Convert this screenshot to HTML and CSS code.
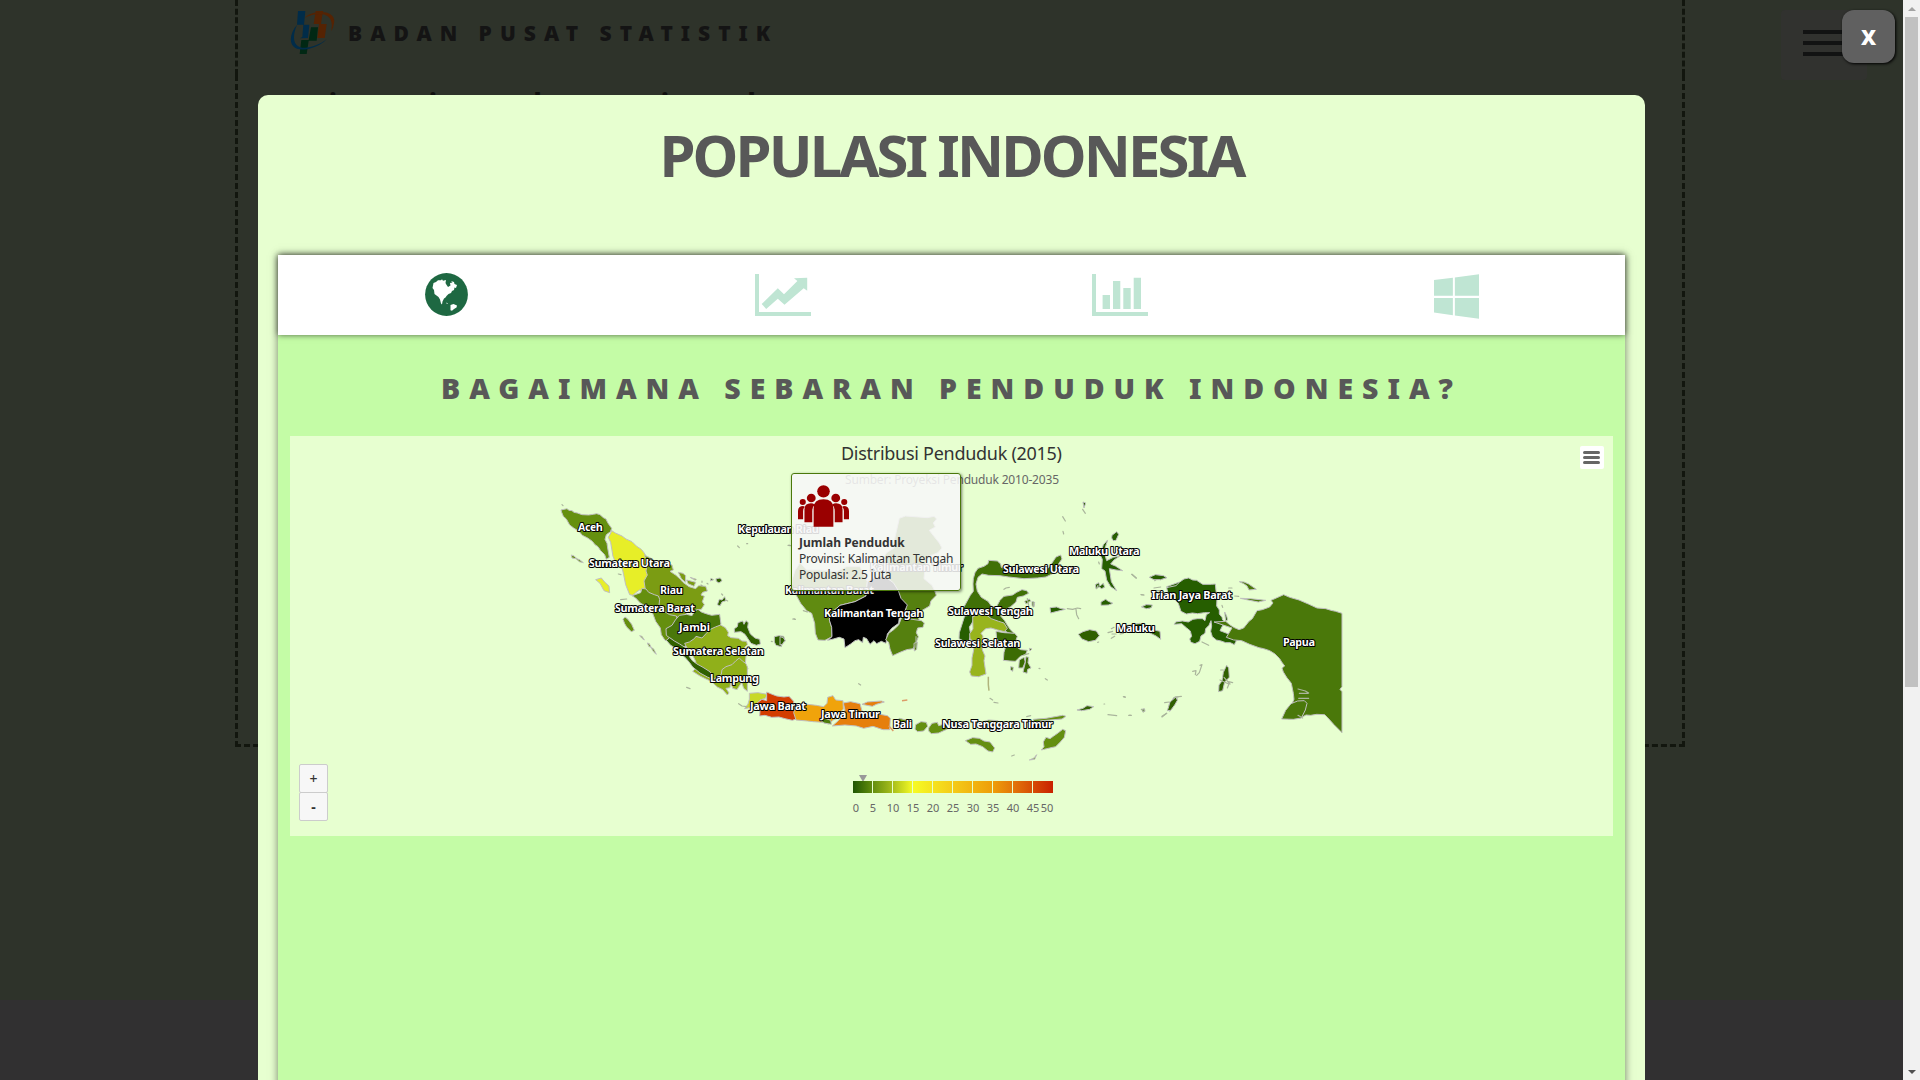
FILE: index.html
```html
<!DOCTYPE html>
<html lang="id">
<head>
<meta charset="utf-8">
<title>Populasi Indonesia</title>
<link rel="stylesheet" href="styles.css">
</head>
<body>
<div class="viewport">
  <div class="page">
    <header class="site-header">
      <svg class="logo" viewBox="30 18 135 135">
        <path fill="#012c49" d="M54 21h22l-4 41h16l-4 40-24 1 7-4 3-37H51z"/>
        <path fill="#552303" d="M107 21h23l-3 11-4 28h17l-6 42h-22l5-42h-16z"/>
        <path fill="#012814" d="M93 70h21l-4 40H86l-6 40H59l5-42h22z"/>
        <path fill="#552303" d="M74 41C98 18 170 14 162 58q-2 15-9 24C168 22 112 22 74 41z"/>
        <path fill="#012c49" d="M51 62C22 95 22 150 88 134q34-8 52-28C95 140 15 152 51 62z"/>
      </svg>
      <span class="brand">BADAN PUSAT STATISTIK</span>
    </header>
    <section class="hero"><span>i</span><span>i</span><span>d</span><span>i</span><span>d</span></section>
    <div class="burger"><i></i><i></i><i></i></div>
  </div>

  <button class="close">X</button>

  <main class="modal">
    <h1>POPULASI INDONESIA</h1>
    <section class="panel">
      <nav class="tabs">
        <a class="tab active"><svg width="43" height="43" viewBox="0 0 43 43"><circle cx="21.5" cy="21.5" r="21.4"/><path fill="#fff" d="M8.500 10L11 9l2-1.700h3l1-1 1 1.500 3-.7-.5 3 .8 1.500 1.700 2.400 2.500-1.500-.5-2.500 2.500-.5L26 8l3 1 .5 2 2.500 1-1 3-1.500-.5-.5 2.500-2 1-1 2-2.500 1-2 2-1 1.500-1.500 1-1.500 3-.5 3-1-1-1-4-1.500-2.500-4-3-.5-4-1.500-2z"/><path fill="#fff" d="M21 29.500l2 1-1 .5zM25.500 32l3-1 3.500 1.500-.5 2-2.500 1.500-2 1.700-1.500-.4z"/></svg></a>
        <a class="tab"><svg width="56" height="42" viewBox="0 0 56 42"><path d="M0 0h4v38h52v4H0z"/><path d="M6.700 30L22.800 14.300l6.200 6L42.400 7 39 4.300l13.200-.6v13l-3.500-2.400-19.200 16.500-6.700-6L11.200 35z"/></svg></a>
        <a class="tab"><svg width="56" height="42" viewBox="0 0 56 42"><path d="M0 0h4v38h52v4H0zM10.600 21H18v14h-7.400zM21 7h7.300v28H21zM31.300 14h7.400v21h-7.400zM41.700 3.700H49V35h-7.300z"/></svg></a>
        <a class="tab windows"><svg width="45" height="45" viewBox="0 0 45.300 45"><path d="M0 6l19-2.300v18H0zM21 3.300L45.300 0v21.700H21zM0 24h19v17.300l-19-2.600zM21 24h24.300v21L21 41.700z"/></svg></a>
      </nav>
      <h2>BAGAIMANA SEBARAN PENDUDUK INDONESIA?</h2>

      <div class="chart">
        <svg class="map" width="1323" height="400" viewBox="290 436 1323 400">
          <defs>
            <linearGradient id="scale"><stop offset="0" stop-color="#1f5602"/><stop offset=".1" stop-color="#648f0d"/><stop offset=".2" stop-color="#a9bf1c"/><stop offset=".3" stop-color="#f6fb25"/><stop offset=".5" stop-color="#f4cb18"/><stop offset=".7" stop-color="#ee9d09"/><stop offset=".8" stop-color="#e3760a"/><stop offset="1" stop-color="#c92100"/></linearGradient>
          </defs>

          <g class="regions" transform="translate(540 480) scale(.33333)">
            <path fill="#65900f" d="M63 90l18-4 6 5 9 1 6 5 10 2 14 5 20 1 14-2 10-2 10 3 10 9 8 4 5 11 12 17-2 9-14 10-4 14 6 12 2 14 5 28-9 6-5-14-12-12-8-12-9-6-8-10-14-10-16-8-10-12-16-10-12-9-10-18-9-8-5-12z"/>
            <path fill="#65900f" d="M94 225l8 3 9 8 9 4 10 8-12-3-10-9-12-2z"/>
            <path fill="#e7ee28" d="M212 150l14 9 20 9 12 9 18 8 14 14 14 9 8 10 10 16 2 22 8 12-2 18-11 9 4 14 2 18-14 7-12-4-12 8-8 8-10-2-12-30-6-30-4-18-18-14-10-23-7-42-7-15 10-18z"/>
            <path fill="#e7ee28" d="M167 299l17-5 10 12 13 12 2 20-17-6-12-22z"/>
            <path fill="#7b9c13" d="M314 226l16 7 14 9 18 7 14 9 8-6 12 3 4 15-10 4 18 12 13 12 8 9 18 13 20 6 9-9 21 2 5 14-14 4-5 8 10 4-6 16 6 9-9 14-24 4-18 5-10 10-20 5-16 9-14-6-10-9-12-16-10-20-2-14-12-6-18-2-2-19-4-26 10-18-4-12 4-20z"/>
            <path fill="#7b9c13" d="M415 277l14 3 8 7-1 20-12-11zM440 300l27 7-5 12-18-8zM450 292l19 6-3 3z"/>
            <path fill="#658f0e" d="M276 347l12-4 14-5 4-13 12 2 8 10 17 7 12 4 4 10-2 18 12 16 20 12 20 4 5 14-10 16-10 10-2 14 5 10-8 10-14-1-11-17-3-20-14-20-9-24-8-10-14-12-15-9-14-15z"/>
            <path fill="#658f0e" d="M249 418l6-7 8 6 12 16 8 18-9 4-14-14-6-10zM299 467l7 2 7 11-7-5zM322 489l6 2 5 10-6-1zM332 501l9 6 8 16-8-7z"/>
            <path fill="#4a780a" d="M378 446l18-10 10-16 12-14 22-3 16 4 8-14 10-5 10 8 14 5 17 5 24-3 4 30-12 11-16 5-9 14-12 12-9 6-15-2-6 9-18 4-15 10-14-4-20-18-18-14z"/>
            <path fill="#90b01a" d="M434 490l14-4 15-10 5-7 18 5 13-14 12-12 15-7 16-6 14 8 9 14-2 10 10 6 22 2 11 8 14 1 2 10-8 8-2 14 6 12-2 22 8 16-8 10-15-4-7-8-8 8-14 9-12 3-12 10-8 8-18 5-22-9-20-10-22-14 12-12-3-18-10-20-10-8z"/>
            <path fill="#90b01a" d="M544 583l2-14 12-9 18-6 12-12 10-8 9 9 11 8 4 10v73l-11-9-6-18-14 22-13-4-6-20-2 18-12 2 9 14-5 6-14-16-16-8-10-9-10-10 18-9z"/>
            <path fill="#306000" d="M379 481l10-8 14 10 16 9 14 9 14 6 12 8-12 13 10 14 14 10 18 10 22 14 3 20-12-5-22-12-22-18-10-14-14-16-16-12-12-15-14-8z"/>
            <path fill="#306000" d="M583 446l9-6 2-12 14-5 4 10 6-11 7 6-2 14 8 20 14 12 14 4 2 14-12 4-16-6-10-15-8-12-12-8-20 2zM703 470l14-3 14 2 5 14-10 9-2 8-16-4-5-10zM528 296l13-2 5 8-9 7-8-5zM538 358l8 2 8-10 4 12-12 4-6 12-8-4zM513 295l8 4-10 4z"/>
            <path fill="#c8d928" d="M628 640l26-2 28 5-6 12-16 5-4 16-12 4-30 6 10-14 4-14z"/>
            <path fill="#d33d00" d="M680 636l14 6 16 6 22 3 15-2 14 15 1 22 10 6 5 22-20 7-22-5-18-5-22 1-20-6-16 2 1-16-12-6 4-18 14-10 14 4z"/>
            <path class="islet" d="M66 74l3 3M596 671l10 7 14 2M593 198l5 5M620 191l3 0M746 196l4 0M440 622l10 4M242 359l18-2M486 303v4M483 315l4 3M501 310l3 2M235 282l8 2M762 416l3 2M694 484l3 1M559 361l4 2M545 342l3 3"/>
          </g>

          <g class="regions" transform="translate(780 420) scale(.33333)">
            <path fill="#55800f" d="M358 295l18-7 40 3 26 2 20-4 8 8-10 12 6 12-18 10 14 18 16 20 8 15-12 14-30 12-8 22-4 44 24 20 8 16 5 14-16 16-4 16-24 14-10 20 4 12-20 6-18-10-8-22 5-12-20-24-4-28-20-20-16-24-6-60 8-12 22-14 2-28z"/>
            <path fill="#608b11" d="M60 428L45 452 36 480 34 505 50 528 62 550 80 572 95 580 104 610 106 640 114 660 135 661 156 650 155 622 148 600 150 582 180 556 225 545 258 528 262 485 240 440 200 440 170 455 120 450 80 450z"/>
            <path fill="#000" d="M262 485L285 472 315 470 340 488 355 512 363 535 382 555 375 572 358 590 356 610 335 625 322 642 318 670 304 664 290 671 282 662 270 673 260 656 250 652 248 668 236 659 225 662 212 672 195 683 192 657 178 652 160 657 143 661 156 650 155 622 148 600 150 582 180 556 225 545 258 528z"/>
            <path fill="#55800f" d="M326 640l14-10 16-15 12-30 14-14 3 14 5 12 34 5 9 7-4 13-16 2-4 14 6 12-6 16-9 20-20 3-20 8-22 10-8-20-4-20-9-7z"/>
            <path fill="#55800f" d="M402 670l10-4-2 22-7 5z"/>
            <path fill="#306000" d="M0 650l10 3 5 8-8 12-7 2z"/>
            <path fill="#f0a30b" d="M48 855l35-2 26 3 22 4 10-10 2-18 16-5 8 13 22 2 1 25-14 16-4 12-12 5-14 12-18-5-28-2-18-2-34-3-7-22z"/>
            <path fill="#4d7d0c" d="M120 900l10-7 22 8 2 12-22-4z"/>
            <path fill="#e67f0c" d="M190 849l22-4 28 6 6 22 24 8 30 2 22 4 9 8-2 34-20 0-30-10-28 6-22-7-34-3-38 3 18-16 14-18 6-14zM246 853l16-7 42-3 9 3-24 7-12 6z"/>
            <path class="coral" d="M326 917l14 16M366 842l16-2"/>
            <path fill="#648f10" d="M345 905l14-10 18 5 18 8-12 10-16 10-12-8zM407 914l16-9 16 2 4 12-12 14-18 2-8-7zM446 924l10-14 16-3 4 10 30-8 12 8-20 12-22 10-22 2-8-8z"/>
            <path class="islet" d="M24 376l8 1M38 597l8 1M70 572l12 4M236 791l6 4M408 650v32"/>
          </g>

          <g class="regions" transform="translate(920 480) scale(.33333)">
            <path fill="#407006" d="M151 346l9-12-1-22 1-16 5-18 9-13 18-6 12-8 2-10 26 2 10 9 2 10 14 5 20 8 46 4 38-2 22-12 12-16 12-18 14-6 4 12-10 14-8 18-10 12-20 10-26 3-40 2-46-5-26-4-34-1-20-4-12 10-6 20 4 22 12 18 20 12 10 14 14 5 12-22 12-12 26-4 12-8 16-8 14 3 6 8-16 8-18 4-4 14-16 14-18 10-12 18 12 14 8 14 10 14 12 12-20-4-28-16-30-16-26-8-40-6-12-14 2-14z"/>
            <path fill="#265e00" d="M134 408l20-3 8 8-6 16-8 12 4 22-4 18-17 2-14-7 1-18z"/>
            <path fill="#98b41d" d="M158 411l16-8 24 1 16 12 22 8 16 5 10 16-9 10-20-5-20-6-16 2-14 14 6 8-3 22 1 20 8 18-3 14 6 40-22 8-22-2-5-12 7-20 0-22 5-24 2-24-13-9-1-16 10-14z"/>
            <path fill="#3c6c04" d="M228 454l24 4 32 2 8 9-4 12-8 8 4 8 18 12 20 2-5 12-16 6-15 15-16-1-20-2 2-24 4-14-14-16-12-10zM272 560l8 2-2 12-6-4zM298 540l14-8 4 14-8 18-12 0zM318 530l8 2-2 16 9 16-10 4-2 12-12-4 6-24z"/>
            <path fill="#407006" d="M314 364l14-7 4 6-14 9zM336 364l8 3-2 14-6-4zM328 505l8 2-6 6z"/>
            <path fill="#265e00" d="M489 66l8 3-5 15zM576 166l14-11 6 8-8 18-8 1-5-8zM563 180L550 194 540 224 547 238 545 266 555 273 560 300 572 320 590 332 574 305 568 266 588 270 608 272 586 258 572 252 582 240 600 228 580 232 560 242 552 215zM543 366l14-8 8 6 14 6-14 5-22 1zM526 314l10-6 4 10 10-8 4 12-10 4-6-6-10 6zM690 291l18-6 20 2 12 6-14 4-28-1zM390 383l20-2 10 4 16 3-24 6-20 5zM665 380l16-7 14 6-6 6zM740 320l14-5 22-8 4 28-20 10z"/>
            <path fill="#306000" d="M475 463l14-8 20-6 20 4 9 14-12 14-20 4-20-8zM594 440l30-4 36-6 28 8 14 12 18 4 2 24-14-10-20-10-30-12-30-2zM471 690l18-5 12-8 20 3-12 8-24 4zM665 688l8-2 2 8-7 1zM744 690l4-18 14-20 10 4-10 20-12 18z"/>
            <path fill="#648f10" d="M136 782l22-9 20 2 14 8 18 3 14 18-6 12-14-3-16-13-20-8-16 1zM364 810l8-10-2-14 8-14 12 4 10-7 14-10 14-11 9 4-4 20-12 14-14 14-18 4zM328 840l14-6 8-10-6 14zM192 724l14-4 28 2 6 8-36 4zM340 718l38-3 50-9 10 3-12 8-60 5-26 5z"/>
            <path class="olive" d="M205 590v24l2 18"/>
            <path class="islet" d="M428 110l8 13M429 154l2 8M488 88l8 12M210 655l8 5M222 667l12 2M357 565l3 1M376 596l6 4M252 328l6-4 10-2M442 386l16 2 14-4 10 2M468 388l2 16 6 12M635 283l13 11M663 344l8 1M574 446l8-4M564 458l14-4M576 462h12M574 475l10-6M564 704l26 3M612 650h3M552 672h2M628 706h5M726 709l14-9M764 652l10-1M704 302l10-8 8 5M702 324l20-3M704 332h16M275 828l8-3M536 246l2 6M534 316l-4 10M322 356l4 20M340 368v12M312 525l14-4M320 710l12-3M533 487l3-1M590 444l10 3M600 462l10-2"/>
          </g>

          <g class="regions" transform="translate(1120 480) scale(.33333)">
            <path fill="#265e00" d="M140 323l28-6 10-10 14-10 14-3 12 6 12 1 18 12 26 0 12-1 2 20 3 22-1 24 8 12 0 12 8 10 2 8 6 5-14 27 26 10 29 8-12 24-12-6-14 0-14-5-14-3-12-10-5-16 3-16-2-16-6 14-10 10-2 14-12 8-4 16-14 7-12-4-4-10 6-8-4-16-12-10-14-12-22 2 4-7 20-3 18 3 14-8 14-2 14 0 8 6 4-18 10-6-16 0-20 3-16-2-18 3-16-8-8-24-12-12-16-4z"/>
            <path fill="#4a780a" d="M317 424l12 10 12 8 16 7 14-5 16-20 10-8 14-24 16-3 22-8 10-12-6-8 16-7 22-10 18 8 28 8 28 12 26 12 26 2 16 5 14 3 19 6v220l-6 8 6 7v123l-24-24-20-22-8-8-24-1-18 3-14-1-18 10-18-1-16 4 6-8 12-24-10-10 8-18-2-18-6-30-14-18-10-16-4-12 8-6-9-12-6-10-14-14-16-10-18-6-14-3-28-10-24-11-24-2-22-8 17-28-54-18z"/>
            <path fill="#4a780a" d="M485 717l12-26 16-20 20-8 20-1 8 8-5 20-12 24-24 4z"/>
            <path fill="#4a780a" d="M358 305l14 1 14 6 10 7 13 9-22 2-6-12-10-7zM361 355l30 1 46 5-22 5-26-5z"/>
            <path fill="#306000" d="M320 556l6 8 2 28-14 14-6 26-12 3 1-20 9-12 4-26zM142 692l4-12 4-14 18-15 4 10-8 14-12 16z"/>
            <path fill="#265e00" d="M88 292l18-8 24 3 10 6-18 6-20 0zM65 381l14-7 18 1-3 8-14 3zM314 396l6 12 3 12-6 2z"/>
            <path class="islet" d="M36 283l13 11M64 344l8 1M306 376l2 6M326 324h10M344 348l12 1M240 556l6-2-8 24-8 8M218 574l10-2-2 12M246 486l20 10M10 650l6 2M26 706h8M64 688l10 2-4 6M126 711l14-11M166 651l18-2M134 668l14-2M300 600l26 12M312 592l18 20M326 605l12 3M302 570l8 0M322 624l4-10M534 627l22 6 10 6M536 655l30 0M538 640h26M548 714l-14-8"/>
          </g>

          <g class="labels">
            <text x="578" y="531" textLength="25">Aceh</text>
            <text x="589" y="567" textLength="81">Sumatera Utara</text>
            <text x="660" y="594" textLength="23">Riau</text>
            <text x="615" y="612" textLength="80">Sumatera Barat</text>
            <text x="679" y="631" textLength="31">Jambi</text>
            <text x="673" y="655" textLength="91">Sumatera Selatan</text>
            <text x="710" y="682" textLength="49">Lampung</text>
            <text x="750" y="710" textLength="56">Jawa Barat</text>
            <text x="738" y="533" textLength="81">Kepulauan Riau</text>
            <text x="785" y="594" textLength="89">Kalimantan Barat</text>
            <text x="870" y="571" textLength="93">Kalimantan Timur</text>
            <text x="824" y="617" textLength="99.500">Kalimantan Tengah</text>
            <text x="948" y="615" textLength="85">Sulawesi Tengah</text>
            <text x="935" y="647" textLength="85.500">Sulawesi Selatan</text>
            <text x="821" y="718" textLength="59">Jawa Timur</text>
            <text x="893" y="728" textLength="19">Bali</text>
            <text x="942" y="728" textLength="111">Nusa Tenggara Timur</text>
            <text x="1003" y="573" textLength="76">Sulawesi Utara</text>
            <text x="1069" y="555" textLength="70.500">Maluku Utara</text>
            <text x="1116" y="632" textLength="39">Maluku</text>
            <text x="1151.500" y="599" textLength="80.500">Irian Jaya Barat</text>
            <text x="1283" y="646" textLength="32">Papua</text>
          </g>

          <text class="chart-title" x="841" y="460" textLength="221">Distribusi Penduduk (2015)</text>
          <text class="chart-subtitle" x="845" y="484" textLength="214">Sumber: Proyeksi Penduduk 2010-2035</text>

          <path fill="#999" d="M859 775h8l-4 7z"/>
          <rect x="853" y="781" width="200" height="12" fill="url(#scale)"/>
          <path stroke="#e7ffd0" d="M872.500 781v12M892.500 781v12M912.500 781v12M932.500 781v12M952.500 781v12M972.500 781v12M992.500 781v12M1012.500 781v12M1032.500 781v12"/>
          <g class="ticks">
            <text x="856" y="812">0</text><text x="873" y="812">5</text><text x="893" y="812">10</text><text x="913" y="812">15</text><text x="933" y="812">20</text><text x="953" y="812">25</text><text x="973" y="812">30</text><text x="993" y="812">35</text><text x="1013" y="812">40</text><text x="1033" y="812">45</text><text x="1047" y="812">50</text>
          </g>
        </svg>

        <div class="menu"><i></i><i></i><i></i></div>
        <div class="zoom"><button>+</button><button>-</button></div>
        <div class="tooltip">
          <svg width="51" height="42" viewBox="57 195 150 126" preserveAspectRatio="none"><g fill="#9a0000"><circle cx="132" cy="214" r="18.500"/><circle cx="96" cy="234" r="13"/><circle cx="168" cy="234" r="13"/><circle cx="71" cy="246" r="9"/><circle cx="193" cy="246" r="9"/><path d="M103 320v-56q0-26 29-26t29 26v56zM76 307v-38q0-19 19-19 7 0 11 4-7 6-7 20v33zM188 307v-38q0-19-19-19-7 0-11 4 7 6 7 20v33zM57 298v-24q0-16 15-16l5 2q-5 5-5 14v24zM207 298v-24q0-16-15-16l-5 2q5 5 5 14v24z"/></g></svg>
          <b>Jumlah Penduduk</b>
          <span>Provinsi: Kalimantan Tengah</span>
          <span>Populasi: 2.5 juta</span>
        </div>
      </div>
    </section>
  </main>
</div>
<aside class="scrollbar"><i class="up"></i><i class="thumb"></i><i class="down"></i></aside>
</body>
</html>
```
FILE: styles.css
```css
* { box-sizing: border-box; }
body {
  margin: 0;
  display: flex;
  width: 1920px;
  height: 1080px;
  overflow: hidden;
  font-family: "Noto Sans", "Open Sans", sans-serif;
}
button { font-family: inherit; padding: 0; }

.viewport {
  position: relative;
  flex: 1;
  overflow: hidden;
  background: linear-gradient(#2e332a 0 1000px, #313031 1000px);
}
.page { padding: 0 218px 0 235px; }
.site-header {
  display: flex;
  align-items: flex-start;
  height: 75px;
  padding: 10px 0 0 52px;
  border: dashed #12160e;
  border-width: 0 3px;
}
.logo { width: 45px; height: 45px; }
.brand {
  margin: 9px 0 0 13px;
  font-size: 21px;
  line-height: 29px;
  font-weight: 900;
  letter-spacing: 8px;
  color: #141414;
  white-space: nowrap;
}
.hero {
  display: grid;
  grid-template-columns: 100px 97px 135px 79px auto;
  align-items: start;
  height: 672px;
  padding: 11px 0 0 91px;
  border: 3px dashed #12160e;
  border-top: 0;
  font-size: 24px;
  line-height: 32px;
  font-weight: 900;
  color: #10100f;
}
.burger {
  position: absolute;
  top: 10px;
  right: 36px;
  display: flex;
  flex-direction: column;
  gap: 7px;
  width: 86px;
  height: 70px;
  padding: 20px 22px;
  border-radius: 4px;
  background: #31322f;
}
.burger i { height: 4px; background: #121313; }

.close {
  position: absolute;
  top: 10px;
  right: 8px;
  width: 53px;
  height: 53px;
  border: 0;
  border-radius: 12px;
  background: #606060;
  box-shadow: 1px 1px 3px #000;
  color: #fff;
  font-size: 21px;
  font-weight: 900;
}

.modal {
  position: absolute;
  top: 95px;
  left: 258px;
  width: 1387px;
  height: 1100px;
  padding: 0 20px;
  border-radius: 10px;
  background: #e7ffd0;
}
h1 {
  margin: 0;
  padding: 20px 0 60px;
  font-size: 58px;
  line-height: 80px;
  font-weight: 700;
  letter-spacing: -2.900px;
  text-align: center;
  color: #585858;
}
.panel {
  height: 1000px;
  background: #c4fca6;
  box-shadow: 0 0 8px rgba(0, 0, 0, .5);
}
.tabs {
  display: grid;
  grid-template-columns: repeat(4, 1fr);
  height: 80px;
  background: #fff;
  box-shadow: 0 0 6px rgba(0, 0, 0, .6);
}
.tab { display: flex; justify-content: center; padding-top: 19px; fill: #bfe5d3; }
.tab.active { padding-top: 18px; fill: #1e6842; }

h2 {
  margin: 0;
  height: 101px;
  padding-top: 33px;
  font-size: 28.500px;
  line-height: 40px;
  font-weight: 900;
  letter-spacing: 8.950px;
  text-align: center;
  white-space: nowrap;
  color: #585858;
}

.chart { position: relative; width: 1323px; height: 400px; margin: 0 12px; background: #e7ffd0; }
.map { display: block; }
.regions path { stroke: #c0c0c0; stroke-width: 1; stroke-linejoin: round; vector-effect: non-scaling-stroke; }
.regions .islet { fill: none; stroke: #aab59c; stroke-width: 1.200; stroke-linecap: round; }
.regions .coral { fill: none; stroke: #dc9c68; stroke-width: 1.500; }
.regions .olive { fill: none; stroke: #b0b47c; stroke-width: 1.500; }
.labels text {
  font-size: 11px;
  font-weight: 700;
  fill: #fff;
  stroke: #000;
  stroke-width: 2px;
  stroke-linejoin: round;
  paint-order: stroke;
}
.chart-title { font-size: 18px; fill: #333; }
.chart-subtitle { font-size: 12px; fill: #666; }
.ticks text { font-size: 11px; text-anchor: middle; fill: #666; }

.menu {
  position: absolute;
  top: 10px;
  right: 9px;
  display: flex;
  flex-direction: column;
  gap: 2px;
  width: 24px;
  height: 23px;
  padding: 5px 4px 5px 3px;
  border-radius: 2px;
  background: #fff;
}
.menu i { height: 3px; border-radius: 2px; background: #666; }

.zoom { position: absolute; left: 9px; bottom: 15px; display: flex; flex-direction: column; }
.zoom button {
  width: 29px;
  height: 29px;
  border: 1px solid #ccc;
  border-radius: 2px;
  background: #f7f7f7;
  color: #333;
  font-size: 14px;
  font-weight: 500;
}
.zoom button + button { margin-top: -1px; font-weight: 700; }

.tooltip {
  position: absolute;
  left: 501px;
  top: 37px;
  display: flex;
  flex-direction: column;
  width: 170px;
  height: 118px;
  padding: 11px 7px 0;
  border: 1px solid #4a780a;
  border-radius: 3px;
  background: rgba(247, 247, 247, .88);
  box-shadow: 1px 1px 3px rgba(0, 0, 0, .5);
  font-size: 12px;
  line-height: 16px;
  color: #333;
  white-space: nowrap;
}
.tooltip svg { flex: none; margin: 0 0 8px -1px; }
.tooltip span { letter-spacing: -.2px; }

.scrollbar {
  display: flex;
  flex-direction: column;
  align-items: center;
  width: 17px;
  padding: 7px 0 6px;
  background: #f1f1f1;
}
.up { border: 4px solid transparent; border-top: 0; border-bottom-color: #a3a3a3; }
.thumb { width: 13px; height: 670px; margin: 6px 0 auto; background: #c1c1c1; }
.down { border: 4px solid transparent; border-bottom: 0; border-top-color: #505050; }
```
